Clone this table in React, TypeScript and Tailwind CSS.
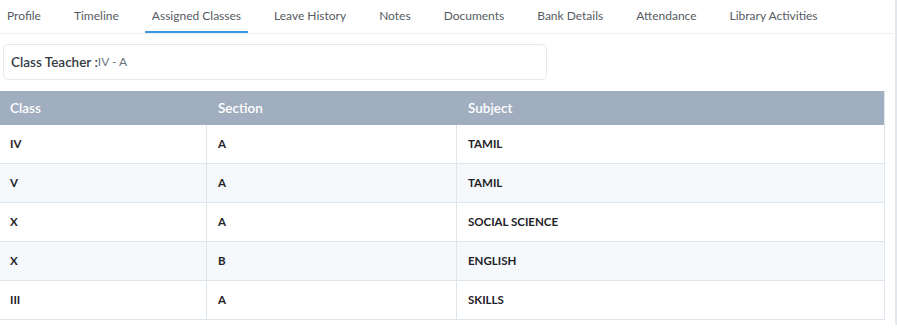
import React from "react";

const tabs = [
  "Profile",
  "Timeline",
  "Assigned Classes",
  "Leave History",
  "Notes",
  "Documents",
  "Bank Details",
  "Attendance",
  "Library Activities",
];

const rows = [
  { cls: "IV", section: "A", subject: "TAMIL" },
  { cls: "V", section: "A", subject: "TAMIL" },
  { cls: "X", section: "A", subject: "SOCIAL SCIENCE" },
  { cls: "X", section: "B", subject: "ENGLISH" },
  { cls: "III", section: "A", subject: "SKILLS" },
];

export default function App() {
  const active = "Assigned Classes";

  return (
    <div
      className="w-[897px] h-[329px] bg-white flex overflow-hidden"
      style={{ fontFamily: "Lato, 'Open Sans', sans-serif" }}
    >
      <div className="w-[895px] flex flex-col">
        {/* Tabs */}
        <div className="h-[34px] flex items-stretch gap-[19px] border-b border-[#eef1f4] mr-[1px]">
          {tabs.map((t) => (
            <div
              key={t}
              className={
                "px-[7px] flex items-center text-[12px] text-[#555b63] border-b-2 " +
                (t === active ? "border-[#3d97e0]" : "border-transparent")
              }
            >
              {t}
            </div>
          ))}
        </div>

        {/* Class teacher */}
        <div className="mt-[10px] ml-[3px] w-[544px] h-[36px] border border-[#e6eaef] rounded-[5px] flex items-center px-[7px]">
          <span className="text-[13.5px] font-semibold text-[#333a42]">Class Teacher :</span>
          <span className="text-[12px] text-[#6b7280]">IV - A</span>
        </div>

        {/* Table */}
        <div className="mt-[11px] w-[885px] border-r border-[#dfe5ec]">
          <div className="h-[34px] bg-[#a1aebf] flex text-white text-[13.5px] font-semibold">
            <div className="w-[207px] px-[10px] flex items-center">Class</div>
            <div className="w-[250px] px-[11px] flex items-center">Section</div>
            <div className="flex-1 px-[11px] flex items-center">Subject</div>
          </div>
          {rows.map((r, i) => (
            <div
              key={i}
              className={
                "h-[39px] flex text-[11.5px] font-bold text-[#1f2328] border-b border-[#dfe5ec] " +
                (i % 2 === 1 ? "bg-[#f6f9fc]" : "bg-white")
              }
            >
              <div className="w-[207px] px-[10px] flex items-center border-r border-[#dfe5ec]">{r.cls}</div>
              <div className="w-[250px] px-[11px] flex items-center border-r border-[#dfe5ec]">{r.section}</div>
              <div className="flex-1 px-[11px] flex items-center">{r.subject}</div>
            </div>
          ))}
        </div>
      </div>
      <div className="w-[2px] h-[325px] bg-[#e4e8ee]" />
    </div>
  );
}
